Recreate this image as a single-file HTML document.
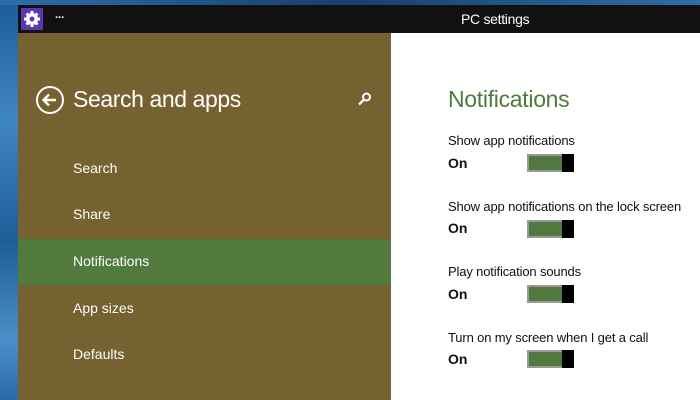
<!DOCTYPE html>
<html><head><style>
*{margin:0;padding:0;box-sizing:border-box}
body{width:700px;height:400px;overflow:hidden;position:relative;background:#fff;font-family:"Liberation Sans",sans-serif}
.desk{position:absolute;left:0;top:0;width:18px;height:400px;background:linear-gradient(180deg,#1a5c9a,#3f86c4 30%,#1d5d98 60%,#4a8fc9 85%,#2a6aa6)}
.top{position:absolute;left:0;top:0;width:700px;height:5px;background:linear-gradient(90deg,#2d6eaa,#16406e 50%,#2e6ea6)}
.bar{position:absolute;left:18px;top:5px;width:682px;height:28px;background:#111}
.gear{position:absolute;left:21px;top:8px;width:22px;height:22px;background:#5a36b0}
.dots{position:absolute;left:55px;top:9px;color:#fff;font-size:11px;font-weight:bold}
.title{position:absolute;left:461px;top:11px;color:#fff;font-size:14px;letter-spacing:-0.3px}
.panel{position:absolute;left:18px;top:33px;width:373px;height:367px;background:#766130}
.hl{position:absolute;left:18px;top:239px;width:373px;height:46px;background:#527a3f}
.h1{position:absolute;left:73px;top:86px;color:#fff;font-size:23px;letter-spacing:-0.4px;white-space:nowrap}
.back{position:absolute;left:36px;top:86px;width:28px;height:28px;border:2px solid #fff;border-radius:50%}
.nav{position:absolute;left:73px;color:#fff;font-size:14px}
.r{position:absolute;left:448px;color:#111;font-size:13px;letter-spacing:-0.15px;white-space:nowrap}
.on{position:absolute;left:448px;color:#111;font-size:14px;font-weight:bold}
.h2{position:absolute;left:448px;top:86px;color:#4f7a3a;font-size:23px;letter-spacing:-0.3px}
.tg{position:absolute;left:527px;width:47px;height:18px;border:2px solid #999;background:#527a3f}
.tg::after{content:"";position:absolute;right:-2px;top:-2px;width:12px;height:18px;background:#000}
</style></head><body>
<div class="desk"></div><div class="top"></div>
<div class="bar"></div>
<div class="gear"><svg width="22" height="22" viewBox="0 0 22 22"><g fill="#fff"><circle cx="11" cy="11" r="6"/><g stroke="#fff" stroke-width="3"><line x1="11" y1="3" x2="11" y2="19"/><line x1="3" y1="11" x2="19" y2="11"/><line x1="5.5" y1="5.5" x2="16.5" y2="16.5"/><line x1="16.5" y1="5.5" x2="5.5" y2="16.5"/></g></g><circle cx="11" cy="11" r="2.5" fill="#5a36b0"/></svg></div>
<div class="dots">...</div>
<div class="title">PC settings</div>
<div class="panel"></div>
<div class="hl"></div>
<div class="back"><svg width="24" height="24" viewBox="0 0 24 24" style="position:absolute;left:0;top:0"><path d="M18 12H6M11 6.5L5.5 12 11 17.5" stroke="#fff" stroke-width="2.4" fill="none"/></svg></div>
<div class="h1">Search and apps</div>
<svg style="position:absolute;left:357px;top:91px" width="16" height="16" viewBox="0 0 16 16"><circle cx="9.5" cy="6" r="3.5" stroke="#fff" stroke-width="2" fill="none"/><line x1="7" y1="8.5" x2="2" y2="13.5" stroke="#fff" stroke-width="2.4"/></svg>
<div class="nav" style="top:160px">Search</div>
<div class="nav" style="top:206px">Share</div>
<div class="nav" style="top:253px">Notifications</div>
<div class="nav" style="top:300px">App sizes</div>
<div class="nav" style="top:346px">Defaults</div>
<div class="h2">Notifications</div>
<div class="r" style="top:133px">Show app notifications</div><div class="on" style="top:155px">On</div><div class="tg" style="top:154px"></div>
<div class="r" style="top:199px">Show app notifications on the lock screen</div><div class="on" style="top:220px">On</div><div class="tg" style="top:220px"></div>
<div class="r" style="top:264px">Play notification sounds</div><div class="on" style="top:286px">On</div><div class="tg" style="top:285px"></div>
<div class="r" style="top:330px">Turn on my screen when I get a call</div><div class="on" style="top:351px">On</div><div class="tg" style="top:350px"></div>
</body></html>
